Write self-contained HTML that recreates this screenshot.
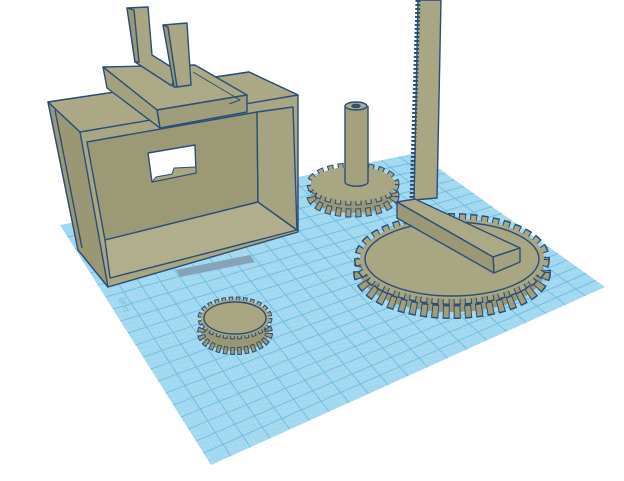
<!DOCTYPE html>
<html><head><meta charset="utf-8"><style>
html,body{margin:0;padding:0;background:#fff;}
svg{display:block;}
</style></head><body>
<svg width="624" height="481" viewBox="0 0 624 481" xmlns="http://www.w3.org/2000/svg">
<defs>
<pattern id="f" width="4" height="4" patternUnits="userSpaceOnUse" patternTransform="matrix(1,-0.2,0.6,1,0,0)">
<rect width="4" height="4" fill="#a6daf1"/>
<path d="M0 0H4M0 0V4" stroke="#93cfea" stroke-width="0.6"/>
</pattern>
</defs>
<rect width="624" height="481" fill="#fff"/>
<polygon points="60,225 417,153 605,287 211,465" fill="url(#f)"/>
<g stroke="#6fbde0" stroke-width="0.9">
<path d="M67.55,237L426.4,159.7M75.1,249L435.8,166.4M82.65,261L445.2,173.1M90.2,273L454.6,179.8M97.75,285L464,186.5M105.3,297L473.4,193.2M112.85,309L482.8,199.9M120.4,321L492.2,206.6M127.95,333L501.6,213.3M135.5,345L511,220M143.05,357L520.4,226.7M150.6,369L529.8,233.4M158.15,381L539.2,240.1M165.7,393L548.6,246.8M173.25,405L558,253.5M180.8,417L567.4,260.2M188.35,429L576.8,266.9M195.9,441L586.2,273.6M203.45,453L595.6,280.3"/>
<path d="M77.85,221.4L230.7,456.1M95.7,217.8L250.4,447.2M113.55,214.2L270.1,438.3M131.4,210.6L289.8,429.4M149.25,207L309.5,420.5M167.1,203.4L329.2,411.6M184.95,199.8L348.9,402.7M202.8,196.2L368.6,393.8M220.65,192.6L388.3,384.9M238.5,189L408,376M256.35,185.4L427.7,367.1M274.2,181.8L447.4,358.2M292.05,178.2L467.1,349.3M309.9,174.6L486.8,340.4M327.75,171L506.5,331.5M345.6,167.4L526.2,322.6M363.45,163.8L545.9,313.7M381.3,160.2L565.6,304.8M399.15,156.6L585.3,295.9"/>
</g>
<text x="120" y="298" font-family="Liberation Sans,sans-serif" font-size="9" fill="#86bcd6" transform="rotate(75 120 298)">grid</text>
<polygon points="176,270 250,255 255,262 180,277" fill="#86a4b8"/>
<g stroke="#2c4d78" stroke-width="1.4" stroke-linejoin="round">
<!-- box -->
<polygon points="48,102 249,72 298,95 298,232 108,287 78,250" fill="#a8a683"/>
<polygon points="48,102 80,132 108,287 78,250" fill="#9a9874"/>
<path d="M55,110 L82,248" fill="none"/>
<polygon points="48,102 249,72 298,95 80,132" fill="#aaa885"/>
<polygon points="87,142 257,112 258,202 105,240" fill="#9c9a76"/>
<polygon points="105,240 258,202 297,230 110,278" fill="#b0ae8c"/>
<polygon points="257,112 293,107 297,230 258,202" fill="#a5a380"/>
<polygon points="148,153 195,145 196,173 152,182" fill="#fff"/>
<polygon points="152,182 156,177 172,174 174,168 196,167 196,173" fill="#a8a683" stroke-width="1"/>
<!-- slider block -->
<polygon points="103,67 195,65 247,95 157,110" fill="#aba986"/>
<polygon points="157,110 247,95 247,112 160,128" fill="#a09e7a"/>
<polygon points="103,67 157,110 160,128 107,88" fill="#a3a17e"/>
<path d="M193,72 L240,100 L229,104" fill="none" stroke-width="1"/>
<!-- posts -->
<polygon points="127,8 148,7 152,55 176,70 172,86 135,62" fill="#a8a683"/>
<polygon points="127,8 134,10 139,62 135,62" fill="#9a9874"/>
<polygon points="163,25 187,23 191,85 177,87" fill="#a8a683"/>
<polygon points="163,25 168,27 177,87 174,87" fill="#9a9874"/>
<!-- rack -->
<polygon points="418,0 441,0 437,198 414,200" fill="#a8a683"/>
<path d="M418,0 L412,200" stroke-width="5" stroke-dasharray="2 2" fill="none"/>
<!-- small gear + shaft -->
<ellipse cx="353" cy="196" rx="42" ry="17" fill="#9a9874" stroke-width="9" stroke-dasharray="6 4"/>
<ellipse cx="353" cy="196" rx="42" ry="17" fill="none" stroke="#a09e7a" stroke-width="7" stroke-dasharray="4 6" stroke-dashoffset="-1"/>
<ellipse cx="353" cy="184" rx="42" ry="17" fill="#9a9874" stroke-width="9" stroke-dasharray="6 4"/>
<ellipse cx="353" cy="184" rx="42" ry="17" fill="#a8a683" stroke="#a8a683" stroke-width="7" stroke-dasharray="4 6" stroke-dashoffset="-1"/>
<ellipse cx="353" cy="184" rx="38" ry="15" fill="#a8a683" stroke="none"/>
<path d="M345,106 V182 A11 4 0 0 0 368,182 V106" fill="#a3a17e"/>
<ellipse cx="356" cy="106" rx="11" ry="4" fill="#aba986"/>
<ellipse cx="356" cy="106" rx="4" ry="1.5" fill="#55584c"/>
<!-- big gear -->
<ellipse cx="452" cy="272" rx="92" ry="40" fill="#9a9874" stroke-width="14" stroke-dasharray="7 4"/>
<ellipse cx="452" cy="272" rx="92" ry="40" fill="none" stroke="#a09e7a" stroke-width="11" stroke-dasharray="5 6" stroke-dashoffset="-1"/>
<ellipse cx="452" cy="259" rx="92" ry="40" fill="#9a9874" stroke-width="12" stroke-dasharray="7 4"/>
<ellipse cx="452" cy="259" rx="92" ry="40" fill="#a8a683" stroke="#a8a683" stroke-width="9" stroke-dasharray="5 6" stroke-dashoffset="-1"/>
<ellipse cx="452" cy="259" rx="87" ry="37" fill="#a8a683"/>
<polygon points="397,202 415,199 520,248 493,257" fill="#aba986"/>
<polygon points="493,257 520,248 520,262 494,273" fill="#a3a17e"/>
<polygon points="397,202 493,257 494,273 397,218" fill="#9b9975"/>
<!-- bottom gear -->
<ellipse cx="235" cy="333" rx="34" ry="18" fill="#9a9874" stroke-width="8" stroke-dasharray="4.5 2.5"/>
<ellipse cx="235" cy="333" rx="34" ry="18" fill="none" stroke="#a09e7a" stroke-width="6" stroke-dasharray="2.5 4.5" stroke-dashoffset="-1"/>
<ellipse cx="235" cy="318" rx="34" ry="18" fill="#9a9874" stroke-width="7" stroke-dasharray="4.5 2.5"/>
<ellipse cx="235" cy="318" rx="34" ry="18" fill="#a8a683" stroke="#a8a683" stroke-width="5" stroke-dasharray="2.5 4.5" stroke-dashoffset="-1"/>
<ellipse cx="235" cy="318" rx="31" ry="16" fill="#a8a683"/>
</g>
</svg>
</body></html>
